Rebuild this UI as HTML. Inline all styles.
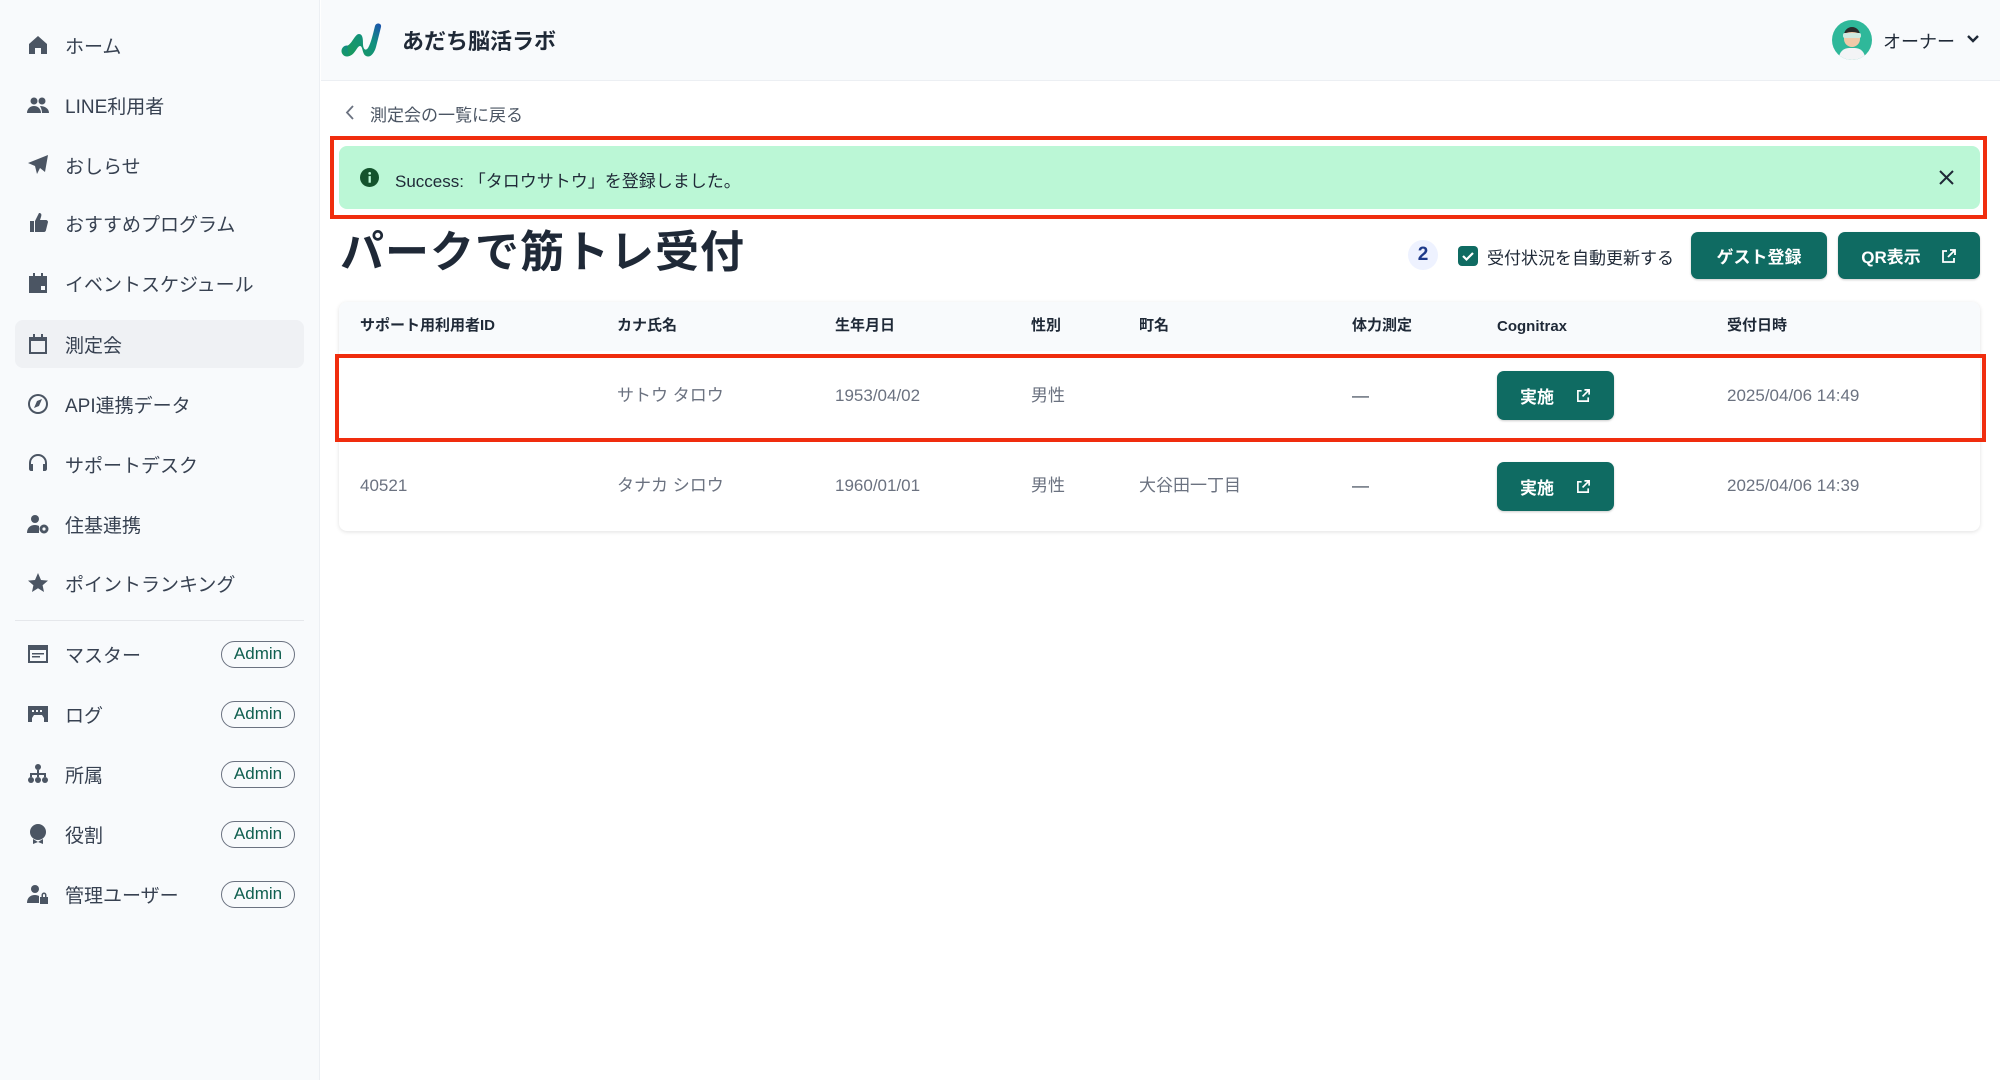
<!DOCTYPE html>
<html><head><meta charset="utf-8"><style>
*{box-sizing:border-box;margin:0;padding:0}
body{width:2000px;height:1080px;overflow:hidden;background:#fff;font-family:"Liberation Sans","Noto Sans CJK JP",sans-serif;color:#1f2937;position:relative}
.side{position:absolute;left:0;top:0;width:320px;height:1080px;background:#f8fafc;border-right:1px solid #eceff3}
.item{position:absolute;left:15px;width:289px;height:48px;display:flex;align-items:center;font-size:19px;color:#374151}
.item svg{position:absolute;left:11px;width:24px;height:24px;fill:#4b5563}
.item span.t{position:absolute;left:50px}
.item.act{background:#eff1f4;border-radius:8px}
.badge{position:absolute;left:206px;width:74px;height:27px;border:1.5px solid #6b7280;border-radius:14px;font-size:17px;color:#0f5f4f;display:flex;align-items:center;justify-content:center}
.div{position:absolute;left:15px;width:289px;top:620px;border-top:1px solid #e5e7eb}
.hdr{position:absolute;left:321px;top:0;right:0;height:81px;background:#f8fafc;border-bottom:1px solid #eceff3}
.abs{position:absolute}
.btn{position:absolute;background:#0f6b62;color:#fff;border-radius:7px;font-weight:bold;font-size:17px;display:flex;align-items:center;justify-content:center;box-shadow:0 1px 2px rgba(0,0,0,.2)}
.th{position:absolute;top:316px;font-size:15px;font-weight:bold;color:#1f2937;line-height:20px;height:20px}
.td{position:absolute;font-size:17px;color:#6b7280;line-height:24px;margin-top:-12px}
</style></head><body>
<div class="side">
 <div class="item" style="top:21px"><svg viewBox="0 0 24 24"><path d="M12 3L3 11v10h6v-6h6v6h6V11z"/></svg><span class="t">ホーム</span></div>
 <div class="item" style="top:81px"><svg viewBox="0 0 24 24"><circle cx="8" cy="8" r="3.5"/><circle cx="16" cy="8" r="3.5"/><path d="M1 20c0-4 3-7 7-7s7 3 7 7z M14 13c4 0 9 2 9 7h-7c0-3-1-5-2-7z"/></svg><span class="t">LINE利用者</span></div>
 <div class="item" style="top:141px"><svg viewBox="0 0 24 24"><path d="M22 2L2 10l7 3 2 8 3-6 5 4z"/></svg><span class="t">おしらせ</span></div>
 <div class="item" style="top:199px"><svg viewBox="0 0 24 24"><path d="M4 10h4v11H4z M9 10l4-8c2 0 3 1 2 4l-1 3h6c1 0 2 1 2 2l-2 8c0 1-1 2-2 2H9z"/></svg><span class="t">おすすめプログラム</span></div>
 <div class="item" style="top:259px"><svg viewBox="0 0 24 24"><path d="M3 5h18v17H3z M7 2h2v4H7z M15 2h2v4h-2z"/><rect x="15" y="15" width="4" height="4" fill="#f8fafc"/></svg><span class="t">イベントスケジュール</span></div>
 <div class="item act" style="top:320px"><svg viewBox="0 0 24 24"><path d="M3 5h18v17H3z M5 9v11h14V9z M7 2h2v4H7z M15 2h2v4h-2z"/></svg><span class="t">測定会</span></div>
 <div class="item" style="top:380px"><svg viewBox="0 0 24 24"><path d="M12 2a10 10 0 100 20 10 10 0 000-20zm0 2a8 8 0 110 16 8 8 0 010-16z M8 16l3-7 5-2-3 7z"/></svg><span class="t">API連携データ</span></div>
 <div class="item" style="top:440px"><svg viewBox="0 0 24 24"><path d="M12 2a9 9 0 00-9 9v6c0 1 1 2 2 2h2v-7H5v-1a7 7 0 0114 0v1h-2v7h2c1 0 2-1 2-2v-6a9 9 0 00-9-9z"/></svg><span class="t">サポートデスク</span></div>
 <div class="item" style="top:500px"><svg viewBox="0 0 24 24"><circle cx="9" cy="7" r="4"/><path d="M1 21c0-5 3-8 8-8 2 0 3 .5 4 1v7z"/><circle cx="18" cy="17" r="4.5"/><circle cx="18" cy="17" r="1.6" fill="#f8fafc"/></svg><span class="t">住基連携</span></div>
 <div class="item" style="top:559px"><svg viewBox="0 0 24 24"><path d="M12 2l3 7 7 .6-5.4 4.7L18 21l-6-3.8L6 21l1.4-6.7L2 9.6 9 9z"/></svg><span class="t">ポイントランキング</span></div>
 <div class="div"></div>
 <div class="item" style="top:630px"><svg viewBox="0 0 24 24"><path d="M2 3h20v18H2z" /><path d="M4 8h16v11H4z" fill="#f8fafc"/><path d="M6 11h12v1.5H6zM6 14h8v1.5H6z"/></svg><span class="t">マスター</span><div class="badge">Admin</div></div>
 <div class="item" style="top:690px"><svg viewBox="0 0 24 24"><path d="M2 4h20v16H2z"/><path d="M6 16l2-3h8l2 3v4H6z M6 8h2v2H6zm4 0h2v2h-2zm4 0h2v2h-2z" fill="#f8fafc"/></svg><span class="t">ログ</span><div class="badge">Admin</div></div>
 <div class="item" style="top:750px"><svg viewBox="0 0 24 24"><circle cx="12" cy="5" r="3"/><path d="M11 8h2v4h-2zM4 11h16v2H4zM4 11h2v4H4zm7 0h2v4h-2zm7 0h2v4h-2z"/><circle cx="5" cy="18" r="3"/><circle cx="12" cy="18" r="3"/><circle cx="19" cy="18" r="3"/></svg><span class="t">所属</span><div class="badge">Admin</div></div>
 <div class="item" style="top:810px"><svg viewBox="0 0 24 24"><circle cx="12" cy="10" r="8"/><path d="M7 17l5 3 5-3v5l-5-2-5 2z"/></svg><span class="t">役割</span><div class="badge">Admin</div></div>
 <div class="item" style="top:870px"><svg viewBox="0 0 24 24"><circle cx="9" cy="7" r="4"/><path d="M1 21c0-5 3-8 8-8 2 0 3 .5 4 1v7z"/><path d="M14 15h8v7h-8z M15.5 15v-2a2.5 2.5 0 015 0v2h-1.5v-2a1 1 0 00-2 0v2z"/></svg><span class="t">管理ユーザー</span><div class="badge">Admin</div></div>
</div>
<div class="hdr">
 <svg class="abs" style="left:19px;top:18px" width="42" height="42" viewBox="0 0 42 42"><defs><linearGradient id="g" x1="0" y1="1" x2="1" y2="0"><stop offset="0" stop-color="#1a9b5a"/><stop offset=".6" stop-color="#11907f"/><stop offset="1" stop-color="#1d4fb0"/></linearGradient></defs><circle cx="7" cy="33" r="5.5" fill="url(#g)"/><path d="M7 28c5-2 8-12 12-12 4 0 4 6 4 10s2 8 5 4c3-5 5-14 7-22 1-4 7-3 6 1l-5 20c-2 7-6 11-10 9-4-2-3-10-6-10-3 0-5 9-11 10z" fill="url(#g)"/></svg>
 <div class="abs" style="left:81px;top:24px;font-size:22px;font-weight:bold;color:#1f2937">あだち脳活ラボ</div>
 <div class="abs" style="left:1511px;top:20px;width:40px;height:40px;border-radius:50%;background:#2fb89a;overflow:hidden"><div style="position:absolute;left:12px;top:7px;width:16px;height:20px;border-radius:8px;background:#f1c9a8;border-top:5px solid #2b2b2b"></div><div style="position:absolute;left:7px;top:28px;width:26px;height:14px;border-radius:10px 10px 0 0;background:#f3f4f6"></div><div style="position:absolute;left:11px;top:13px;width:18px;height:5px;background:#cfe8df;border-radius:2px"></div></div>
 <div class="abs" style="left:1562px;top:28px;font-size:18px;color:#1f2937">オーナー</div>
 <svg class="abs" style="left:1645px;top:33px" width="14" height="12" viewBox="0 0 14 12"><path d="M2 3l5 5 5-5" stroke="#1f2937" stroke-width="2.4" fill="none"/></svg>
</div>
<svg class="abs" style="left:344px;top:104px" width="12" height="17" viewBox="0 0 12 17"><path d="M9 2L3 8.5 9 15" stroke="#6b7280" stroke-width="1.8" fill="none"/></svg>
<div class="abs" style="left:370px;top:101px;font-size:17px;color:#4b5563">測定会の一覧に戻る</div>
<div class="abs" style="left:330px;top:136px;width:1657px;height:83px;border:4px solid #f02d0e"></div>
<div class="abs" style="left:339px;top:146px;width:1641px;height:63px;background:#bbf7d6;border-radius:8px"></div>
<svg class="abs" style="left:360px;top:168px" width="19" height="19" viewBox="0 0 20 20"><circle cx="10" cy="10" r="10" fill="#14532d"/><rect x="9" y="8.5" width="2.4" height="7" fill="#bbf7d6"/><circle cx="10.2" cy="5.6" r="1.4" fill="#bbf7d6"/></svg>
<div class="abs" style="left:395px;top:167px;font-size:17px;color:#1f2937">Success: 「タロウサトウ」を登録しました。</div>
<svg class="abs" style="left:1938px;top:169px" width="17" height="17" viewBox="0 0 17 17"><path d="M2 2l13 13M15 2L2 15" stroke="#1f2937" stroke-width="2"/></svg>
<div class="abs" style="left:340px;top:228px;font-size:44px;font-weight:bold;color:#1f2937;letter-spacing:1px;line-height:50px">パークで筋トレ受付</div>
<div class="abs" style="left:1408px;top:240px;width:30px;height:30px;border-radius:50%;background:#eef2ff;color:#1e3a8a;font-weight:bold;font-size:19px;display:flex;align-items:center;justify-content:center">2</div>
<div class="abs" style="left:1458px;top:246px;width:20px;height:20px;border-radius:4px;background:#0f6b62"><svg width="20" height="20" viewBox="0 0 20 20"><path d="M5 10l3.5 3.5L15 7" stroke="#fff" stroke-width="2.2" fill="none"/></svg></div>
<div class="abs" style="left:1487px;top:244px;font-size:17px;color:#1f2937">受付状況を自動更新する</div>
<div class="btn" style="left:1691px;top:232px;width:136px;height:47px">ゲスト登録</div>
<div class="btn" style="left:1838px;top:232px;width:142px;height:47px">QR表示<svg style="margin-left:20px" width="16" height="16" viewBox="0 0 16 16"><path d="M9 2h5v5M14 2L7 9M6 3H2v11h11v-4" stroke="#fff" stroke-width="1.8" fill="none"/></svg></div>
<div class="abs" style="left:339px;top:302px;width:1641px;height:229px;border-radius:8px;box-shadow:0 1px 4px rgba(0,0,0,.12);background:#fff;overflow:hidden"><div style="height:49px;background:#f8fafc"></div><div style="height:90px;border-bottom:1px solid #f1f3f5"></div></div>
<div class="th" style="left:360px">サポート用利用者ID</div>
<div class="th" style="left:617px">カナ氏名</div>
<div class="th" style="left:835px">生年月日</div>
<div class="th" style="left:1031px">性別</div>
<div class="th" style="left:1139px">町名</div>
<div class="th" style="left:1352px">体力測定</div>
<div class="th" style="left:1497px;top:317px">Cognitrax</div>
<div class="th" style="left:1727px">受付日時</div>
<div class="abs" style="left:335px;top:354px;width:1651px;height:88px;border:4px solid #f02d0e"></div>
<div class="td" style="left:617px;top:396px">サトウ タロウ</div>
<div class="td" style="left:835px;top:396px">1953/04/02</div>
<div class="td" style="left:1031px;top:396px">男性</div>
<div class="td" style="left:1352px;top:396px;color:#374151">—</div>
<div class="btn" style="left:1497px;top:371px;width:117px;height:49px">実施<svg style="margin-left:22px" width="15" height="15" viewBox="0 0 16 16"><path d="M9 2h5v5M14 2L7 9M6 3H2v11h11v-4" stroke="#fff" stroke-width="1.8" fill="none"/></svg></div>
<div class="td" style="left:1727px;top:396px">2025/04/06 14:49</div>
<div class="td" style="left:360px;top:486px">40521</div>
<div class="td" style="left:617px;top:486px">タナカ シロウ</div>
<div class="td" style="left:835px;top:486px">1960/01/01</div>
<div class="td" style="left:1031px;top:486px">男性</div>
<div class="td" style="left:1139px;top:486px">大谷田一丁目</div>
<div class="td" style="left:1352px;top:486px;color:#374151">—</div>
<div class="btn" style="left:1497px;top:462px;width:117px;height:49px">実施<svg style="margin-left:22px" width="15" height="15" viewBox="0 0 16 16"><path d="M9 2h5v5M14 2L7 9M6 3H2v11h11v-4" stroke="#fff" stroke-width="1.8" fill="none"/></svg></div>
<div class="td" style="left:1727px;top:486px">2025/04/06 14:39</div>
</body></html>
